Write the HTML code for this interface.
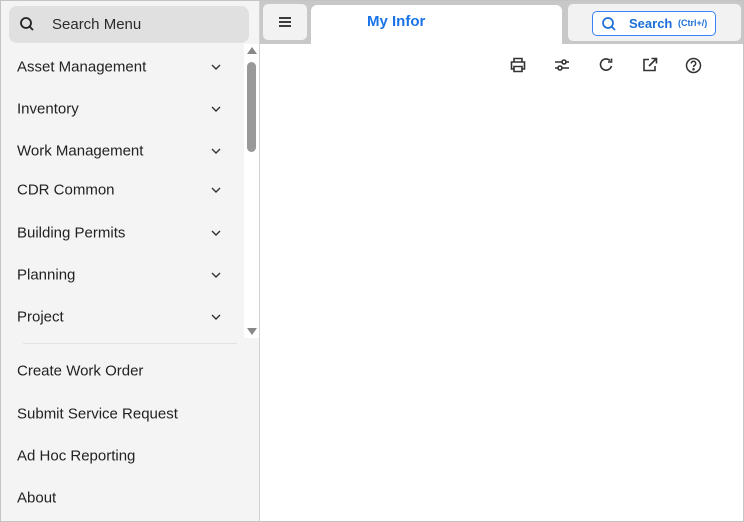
<!DOCTYPE html>
<html><head><style>
*{margin:0;padding:0;box-sizing:border-box}
body{width:744px;height:522px;position:relative;overflow:hidden;font-family:"Liberation Sans",sans-serif;background:#fff}
.frame{position:absolute;inset:0;border:1px solid #c4c4c4;pointer-events:none;z-index:9}
.side{position:absolute;left:0;top:0;width:260px;height:522px;background:#f4f4f4;border-right:1px solid #d2d2d2}
.srch{position:absolute;left:9px;top:6px;width:240px;height:37px;background:#e0e0e0;border-radius:8px}
.srch span{position:absolute;left:43px;top:10px;font-size:15px;color:#2a2a2a}
.it{position:absolute;left:17px;font-size:15px;color:#222;transform:translateY(-50%)}
.chev{position:absolute;left:211px;transform:translateY(-50%)}
.top{position:absolute;left:260px;top:0;width:484px;height:44px;background:#c8c8c8}
.ic{position:absolute;top:57px}
</style></head><body>
<div class="side">
 <div class="srch"><svg style="position:absolute;left:10px;top:10px" width="16" height="16" viewBox="0 0 16 16"><circle cx="7" cy="7" r="5" fill="none" stroke="#222" stroke-width="1.8"/><path d="M10.5 10.5L14 14" stroke="#222" stroke-width="1.8"/></svg><span>Search Menu</span></div>
 <div style="position:absolute;left:244px;top:44px;width:15px;height:294px;background:#fff"></div>
 <div style="position:absolute;left:247px;top:47px;width:0;height:0;border-left:5px solid transparent;border-right:5px solid transparent;border-bottom:7px solid #888"></div>
 <div style="position:absolute;left:247px;top:62px;width:9px;height:90px;background:#999;border-radius:5px"></div>
 <div style="position:absolute;left:247px;top:328px;width:0;height:0;border-left:5px solid transparent;border-right:5px solid transparent;border-top:7px solid #888"></div>
 <div style="position:absolute;left:23px;top:343px;width:214px;height:1px;background:#e2e2e2"></div>
</div>
<div class="it" style="top:67px">Asset Management</div>
<div class="it" style="top:109px">Inventory</div>
<div class="it" style="top:151px">Work Management</div>
<div class="it" style="top:190px">CDR Common</div>
<div class="it" style="top:233px">Building Permits</div>
<div class="it" style="top:275px">Planning</div>
<div class="it" style="top:317px">Project</div>
<div class="it" style="top:371px">Create Work Order</div>
<div class="it" style="top:414px">Submit Service Request</div>
<div class="it" style="top:456px">Ad Hoc Reporting</div>
<div class="it" style="top:498px">About</div>
<svg class="chev" style="top:67px" width="10" height="6"><path d="M1 1l4 4 4-4" fill="none" stroke="#333" stroke-width="1.4"/></svg>
<svg class="chev" style="top:109px" width="10" height="6"><path d="M1 1l4 4 4-4" fill="none" stroke="#333" stroke-width="1.4"/></svg>
<svg class="chev" style="top:151px" width="10" height="6"><path d="M1 1l4 4 4-4" fill="none" stroke="#333" stroke-width="1.4"/></svg>
<svg class="chev" style="top:190px" width="10" height="6"><path d="M1 1l4 4 4-4" fill="none" stroke="#333" stroke-width="1.4"/></svg>
<svg class="chev" style="top:233px" width="10" height="6"><path d="M1 1l4 4 4-4" fill="none" stroke="#333" stroke-width="1.4"/></svg>
<svg class="chev" style="top:275px" width="10" height="6"><path d="M1 1l4 4 4-4" fill="none" stroke="#333" stroke-width="1.4"/></svg>
<svg class="chev" style="top:317px" width="10" height="6"><path d="M1 1l4 4 4-4" fill="none" stroke="#333" stroke-width="1.4"/></svg>
<div class="top">
 <div style="position:absolute;left:3px;top:4px;width:44px;height:36px;background:#f2f2f2;border-radius:5px"><svg style="position:absolute;left:16px;top:13px" width="12" height="10"><path d="M0 1h12M0 5h12M0 9h12" stroke="#222" stroke-width="1.8"/></svg></div>
 <div style="position:absolute;left:51px;top:5px;width:251px;height:40px;background:#fff;border-radius:6px 6px 0 0"><span style="position:absolute;left:56px;top:8px;font-size:15px;font-weight:bold;color:#1a73e8">My Infor</span></div>
 <div style="position:absolute;left:308px;top:4px;width:173px;height:37px;background:#f2f2f2;border-radius:5px">
  <div style="position:absolute;left:24px;top:7px;width:124px;height:25px;border:1px solid #3b82f6;border-radius:5px;background:#fff">
   <svg style="position:absolute;left:8px;top:4px" width="16" height="16" viewBox="0 0 16 16"><circle cx="7" cy="7" r="5" fill="none" stroke="#1a6fd8" stroke-width="1.7"/><path d="M10.5 10.5L14 14" stroke="#1a6fd8" stroke-width="1.7"/></svg>
   <span style="position:absolute;left:36px;top:4px;font-size:13px;font-weight:bold;color:#1a6fd8">Search</span>
   <span style="position:absolute;left:85px;top:6px;font-size:9px;font-weight:bold;color:#1a6fd8">(Ctrl+/)</span>
  </div>
 </div>
</div>
<svg class="ic" style="left:510px" width="16" height="16" viewBox="0 0 16 16" fill="none" stroke="#333" stroke-width="1.6"><path d="M4 5V1.5h8V5M4 12H1.5V5h13v7H12M4 9.5h8v5H4z"/></svg>
<svg class="ic" style="left:554px" width="16" height="16" viewBox="0 0 16 16" fill="none" stroke="#333" stroke-width="1.6"><path d="M1 5h14M1 11h14"/><circle cx="10" cy="5" r="2" fill="#fff"/><circle cx="6" cy="11" r="2" fill="#fff"/></svg>
<svg class="ic" style="left:598px" width="16" height="16" viewBox="0 0 16 16" fill="none" stroke="#333" stroke-width="1.6"><path d="M13.5 9A5.6 5.6 0 1 1 12 3.5M13.5 1.5v3.5H10"/></svg>
<svg class="ic" style="left:642px" width="16" height="16" viewBox="0 0 16 16" fill="none" stroke="#333" stroke-width="1.6"><path d="M7 2.5H2v11h11V9M9.5 1.5h5v5M14.5 1.5L7 9"/></svg>
<svg class="ic" style="left:685px" width="17" height="17" viewBox="0 0 17 17" fill="none" stroke="#333" stroke-width="1.5"><circle cx="8.5" cy="8.5" r="7"/><path d="M6.3 6.5a2.2 2.2 0 1 1 3 2c-.7.3-.8.8-.8 1.6"/><circle cx="8.5" cy="12.3" r=".5" fill="#333"/></svg>
<div class="frame"></div>
</body></html>
